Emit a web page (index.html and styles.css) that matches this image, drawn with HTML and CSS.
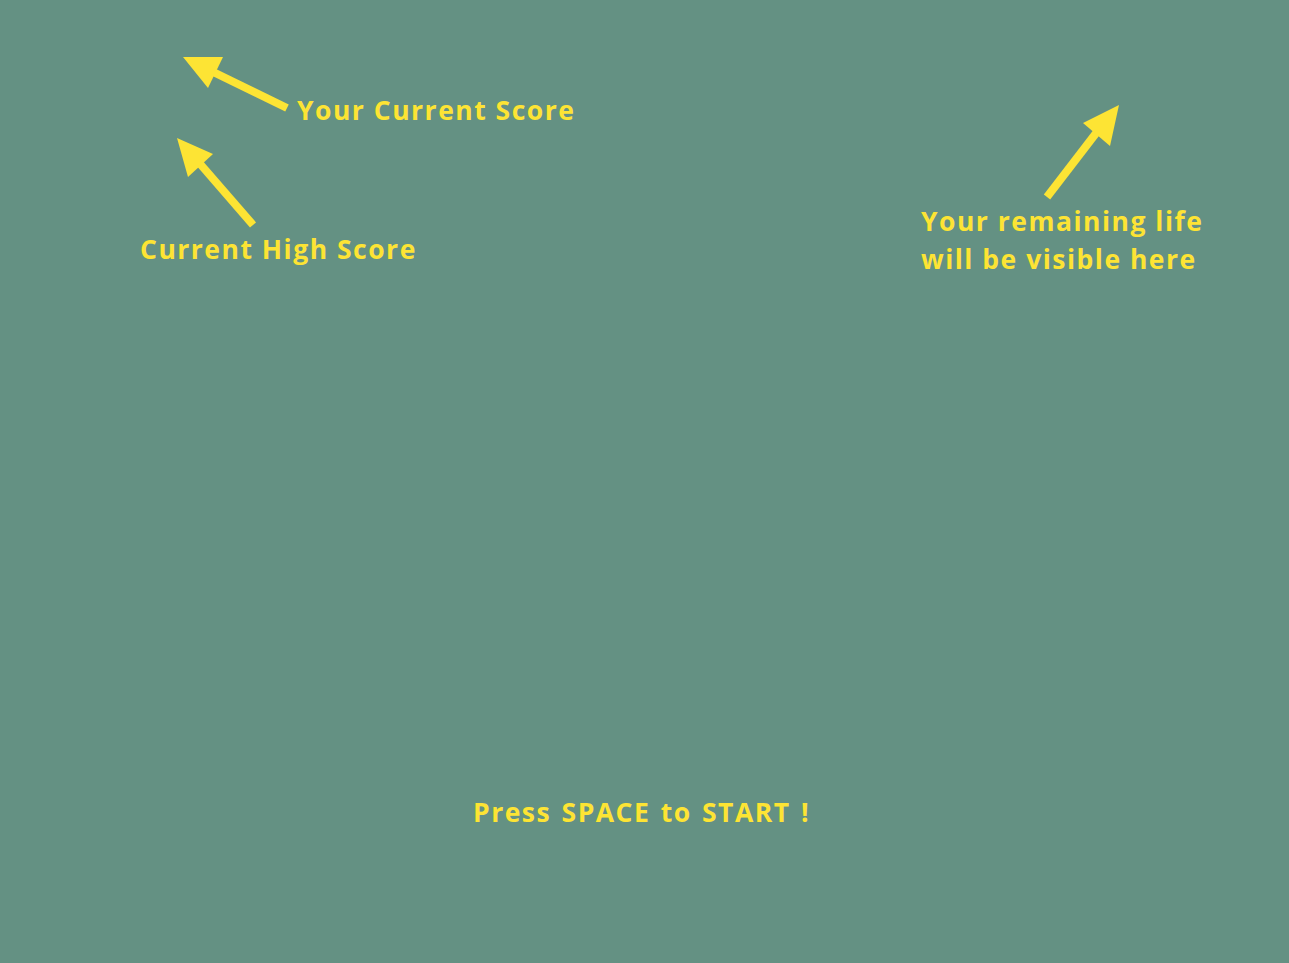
FILE: index.html
```html
<!DOCTYPE html>
<html>
<head>
<meta charset="utf-8">
<title>Game</title>
<link rel="stylesheet" href="styles.css">
</head>
<body>
<div class="stage">
  <svg class="arrows" width="1289" height="963" viewBox="0 0 1289 963">
    <line x1="287" y1="108" x2="205" y2="68" class="shaft"/>
    <polygon points="183,57 223,57 208,88" class="head"/>
    <line x1="253" y1="225" x2="195" y2="158" class="shaft"/>
    <polygon points="177,138 213,154 188,177" class="head"/>
    <line x1="1047" y1="197" x2="1100" y2="128" class="shaft"/>
    <polygon points="1119,105 1083,123 1110,146" class="head"/>
  </svg>
  <div class="label label-score">Your Current Score</div>
  <div class="label label-high">Current High Score</div>
  <div class="label label-life">Your remaining life<br>will be visible here</div>
  <div class="label label-start">Press SPACE to START !</div>
</div>
</body>
</html>
```

FILE: styles.css
```css
html, body {
  margin: 0;
  padding: 0;
  background: #649183;
  overflow: hidden;
}
.stage {
  position: relative;
  width: 1289px;
  height: 963px;
  background: #649183;
  font-family: "Open Sans", "Liberation Sans", sans-serif;
  font-weight: 700;
  color: #fde434;
}
.arrows {
  position: absolute;
  left: 0;
  top: 0;
}
.shaft {
  stroke: #fde434;
  stroke-width: 8;
}
.head {
  fill: #fde434;
}
.label {
  position: absolute;
  font-size: 26.5px;
  line-height: 38px;
  letter-spacing: 1.5px;
  white-space: nowrap;
}
.label-score { left: 297px; top: 91px; }
.label-high { left: 140px; top: 230px; }
.label-life { left: 921px; top: 202px; }
.label-start { left: 473px; top: 793px; word-spacing: 2px; }
```
